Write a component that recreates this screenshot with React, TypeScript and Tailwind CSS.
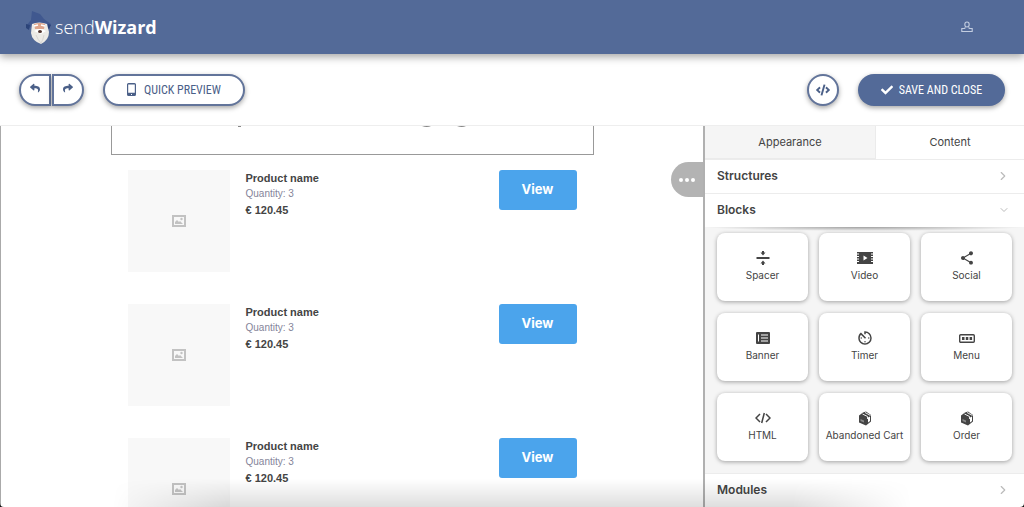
import { type ReactNode, useState } from 'react'
import { FaCheck, FaCode, FaReply, FaShare } from 'react-icons/fa'
import { MdAvTimer, MdShare } from 'react-icons/md'
import { ChevronDown, ChevronRight } from 'lucide-react'

type Product = {
  id: number
  name: string
  quantity: number
  price: string
}

type Block = {
  label: string
  icon: ReactNode
}

const products: Product[] = [
  { id: 1, name: 'Product name', quantity: 3, price: '€ 120.45' },
  { id: 2, name: 'Product name', quantity: 3, price: '€ 120.45' },
  { id: 3, name: 'Product name', quantity: 3, price: '€ 120.45' },
]

const blocks: Block[] = [
  { label: 'Spacer', icon: <SpacerIcon /> },
  { label: 'Video', icon: <VideoIcon /> },
  { label: 'Social', icon: <MdShare size={16} /> },
  { label: 'Banner', icon: <BannerIcon /> },
  { label: 'Timer', icon: <MdAvTimer size={18} /> },
  { label: 'Menu', icon: <MenuIcon /> },
  { label: 'HTML', icon: <CodeIcon /> },
  { label: 'Abandoned Cart', icon: <BoxIcon /> },
  { label: 'Order', icon: <BoxIcon /> },
]

export default function App() {
  return (
    <div className="relative flex h-screen flex-col overflow-hidden bg-white font-['Inter',sans-serif] text-[#444]">
      <Header />
      <Toolbar />
      <main className="flex min-h-0 flex-1 border-t border-[#eee]">
        <Canvas />
        <Sidebar />
      </main>
      <div
        aria-hidden
        className="pointer-events-none absolute inset-x-28 bottom-0 h-7 bg-linear-to-t from-black/13 to-transparent mask-x-from-85%"
      />
      <svg aria-hidden className="pointer-events-none absolute bottom-0 left-0 h-1 w-1" viewBox="0 0 4 4">
        <path d="M0 0Q0 4 4 4H0Z" fill="#111" />
      </svg>
      <svg aria-hidden className="pointer-events-none absolute bottom-0 right-0 h-1 w-1" viewBox="0 0 4 4">
        <path d="M4 0Q4 4 0 4H4Z" fill="#111" />
      </svg>
    </div>
  )
}

function Header() {
  return (
    <header className="z-10 flex h-[54px] shrink-0 items-center justify-between bg-[#536a98] pl-6 pr-[51px] shadow-[0_3px_8px_rgba(0,0,0,0.35)]">
      <a href="#" className="flex items-center gap-[3px] font-['Open_Sans',sans-serif] text-[18px] leading-6 text-white">
        <WizardLogo />
        <span>
          <span className="font-light">send</span>
          <span className="font-bold">Wizard</span>
        </span>
      </a>
      <button type="button" aria-label="Account" className="text-[#c3cde0]">
        <UserIcon />
      </button>
    </header>
  )
}

const outlined = 'flex h-8 items-center justify-center border-2 border-[#62749a] bg-white text-[#4b6088]'
const raised = 'shadow-[0_2px_5px_rgba(0,0,0,0.35)]'

function Toolbar() {
  return (
    <div className="flex h-[71px] shrink-0 items-center justify-between px-[19px] font-['Roboto_Condensed','Roboto',sans-serif] text-[12px]">
      <div className="flex items-center gap-[19px]">
        <div className="flex gap-px">
          <button type="button" aria-label="Undo" className={`${outlined} ${raised} w-8 rounded-l-full pb-1`}>
            <FaReply size={10} />
          </button>
          <button type="button" aria-label="Redo" className={`${outlined} ${raised} w-8 rounded-r-full pb-1`}>
            <FaShare size={10} />
          </button>
        </div>
        <button type="button" className={`${outlined} ${raised} w-[142px] gap-2 rounded-full`}>
          <PhoneIcon />
          QUICK PREVIEW
        </button>
      </div>
      <div className="flex items-center gap-[19px]">
        <button type="button" aria-label="Edit code" className={`${outlined} ${raised} w-8 rounded-full`}>
          <FaCode size={14} />
        </button>
        <button
          type="button"
          className={`${raised} flex h-8 w-[147px] items-center justify-center gap-[6px] rounded-full bg-[#536a98] text-white`}
        >
          <FaCheck size={12} />
          SAVE AND CLOSE
        </button>
      </div>
    </div>
  )
}

function Canvas() {
  return (
    <section className="relative min-w-0 flex-1 overflow-hidden border-l border-[#aaa]">
      <div className="mx-auto w-[483px]">
        <div className="h-[29px] border border-t-0 border-[#999]">
          {/* descenders of the heading that is scrolled out of view */}
          <svg aria-hidden width="481" height="2" viewBox="0 0 481 2" fill="#888">
            <path d="M126 0h3v1h-3zM310 0h9q-4 2-9 0zM345 0h9q-4 2-9 0z" />
          </svg>
        </div>
        <ul className="flex flex-col gap-8 px-[17px] pt-[15px]">
          {products.map((product) => (
            <ProductRow key={product.id} product={product} />
          ))}
        </ul>
      </div>
      <button
        type="button"
        aria-label="More options"
        className="absolute right-0 top-9 flex h-[35px] w-8 items-center justify-center gap-[2px] rounded-l-full bg-[#b3b3b3]"
      >
        <span className="size-1 rounded-full bg-white" />
        <span className="size-1 rounded-full bg-white" />
        <span className="size-1 rounded-full bg-white" />
      </button>
    </section>
  )
}

function ProductRow({ product }: { product: Product }) {
  return (
    <li className="flex h-[102px] items-start gap-4 font-['Liberation_Sans',sans-serif]">
      <div className="flex h-full w-[102px] items-center justify-center bg-[#f8f8f8]">
        <PictureIcon />
      </div>
      <div className="flex-1 leading-4">
        <h3 className="text-[11px] font-bold">{product.name}</h3>
        <p className="text-[10px] text-[#85859a]">Quantity: {product.quantity}</p>
        <p className="text-[11px] font-bold">{product.price}</p>
      </div>
      <button
        type="button"
        className="h-10 w-[78px] rounded-[3px] bg-[#4ba4ec] font-['Inter',sans-serif] text-[13px] font-bold text-white"
      >
        View
      </button>
    </li>
  )
}

function Sidebar() {
  const [tab, setTab] = useState('Content')
  return (
    <aside className="flex w-[321px] shrink-0 flex-col border-l-2 border-[#b0b0b0] bg-[#f5f5f5]">
      <div role="tablist" className="flex shrink-0 text-[11px]">
        {['Appearance', 'Content'].map((name) => (
          <button
            key={name}
            type="button"
            role="tab"
            aria-selected={tab === name}
            onClick={() => setTab(name)}
            className={
              tab === name
                ? 'h-[33px] w-[148px] bg-white'
                : 'h-[33px] flex-1 border-b border-r border-[#ebebeb] bg-[#f5f5f5]'
            }
          >
            {name}
          </button>
        ))}
      </div>
      <SectionHeader title="Structures" />
      <SectionHeader title="Blocks" open />
      <div className="relative grid shrink-0 grid-cols-3 gap-x-[11px] gap-y-3 px-3 pb-3 pt-[6px]">
        <div
          aria-hidden
          className="absolute inset-x-0 top-0 h-1 bg-[radial-gradient(50%_100%_at_50%_0%,rgba(0,0,0,0.35),transparent)]"
        />
        {blocks.map((block) => (
          <BlockCard key={block.label} block={block} />
        ))}
      </div>
      <SectionHeader title="Modules" />
    </aside>
  )
}

function SectionHeader({ title, open = false }: { title: string; open?: boolean }) {
  return (
    <button
      type="button"
      aria-expanded={open}
      className="flex h-[34px] shrink-0 items-center justify-between border-y border-t-[#ececec] border-b-transparent bg-white pl-3 pr-[14px] text-[12px] font-semibold"
    >
      {title}
      {open ? (
        <ChevronDown size={12} strokeWidth={2} className="text-[#bbb]" />
      ) : (
        <ChevronRight size={14} strokeWidth={2} className="text-[#bbb]" />
      )}
    </button>
  )
}

function BlockCard({ block }: { block: Block }) {
  return (
    <button
      type="button"
      className="relative flex h-[68px] flex-col items-center justify-center whitespace-nowrap rounded-lg bg-white pb-[2px] text-[10px] leading-4 shadow-[0_1px_4px_rgba(0,0,0,0.35)]"
    >
      <span className="flex h-[18px] items-center text-[#444]">{block.icon}</span>
      {block.label}
    </button>
  )
}

function WizardLogo() {
  return (
    <svg aria-hidden width="28" height="36" viewBox="0 0 28 36">
      <path d="M2 17L7 11L8 2L16 5L20 10L27 15L25 20L19 17H8L4 20Z" fill="#40588f" />
      <path d="M2 15l4 1-1 5-3-2zM24 15l3 1-2 4-2-1z" fill="#2c4479" />
      <path d="M8 15Q15 12 23 15L25 23Q25 31 17 35Q8 32 7 24Z" fill="#eceae6" />
      <path d="M10 15Q16 13 21 15L20 20H11Z" fill="#dda48c" />
      <path d="M10 17l4-1M17 16l4 1" stroke="#fff" strokeWidth="1.5" />
      <path d="M10 22Q16 18 22 22L17 25Z" fill="#fff" />
      <ellipse cx="16" cy="22.500" rx="2" ry="1.500" fill="#51352f" />
      <path d="M12 26Q14 31 17 34M20 26Q19 31 17 34" fill="none" stroke="#cecdcc" strokeWidth=".7" />
    </svg>
  )
}

function UserIcon() {
  return (
    <svg aria-hidden width="12" height="12" viewBox="0 0 12 12" fill="none" stroke="currentColor" strokeWidth="1.100">
      <ellipse cx="6" cy="3.500" rx="2.200" ry="2.500" />
      <path d="M4.500 6.500L3.500 7.500H.8V10.500H11.200V7.500H8.500L7.500 6.500" />
    </svg>
  )
}

function PhoneIcon() {
  return (
    <svg aria-hidden width="9" height="13" viewBox="0 0 9 13">
      <path
        d="M1.500 0h6A1.500 1.500 0 0 1 9 1.500v10A1.500 1.500 0 0 1 7.500 13h-6A1.500 1.500 0 0 1 0 11.500v-10A1.500 1.500 0 0 1 1.500 0ZM1.200 1.500v8.300h6.600V1.500ZM4 11h1v1H4Z"
        fill="currentColor"
        fillRule="evenodd"
      />
    </svg>
  )
}

function PictureIcon() {
  return (
    <svg aria-hidden width="14" height="12" viewBox="0 0 14 12" fill="none" stroke="#c2c2c2">
      <rect x="1" y="1" width="12" height="10" strokeWidth="2" />
      <path d="M3 9V7l2-2 2 2 1-1 3 3Z" fill="#c2c2c2" stroke="none" />
      <circle cx="9.500" cy="4" r="1.200" fill="#c2c2c2" stroke="none" />
    </svg>
  )
}

function SpacerIcon() {
  return (
    <svg aria-hidden width="14" height="14" viewBox="0 0 14 14" fill="currentColor">
      <path d="M.5 6h13v2H.5zM6 0h2v1.500h1.500L7 4.500 4.500 1.500H6zM6 14h2v-1.500h1.500L7 9.500l-2.500 3H6z" />
    </svg>
  )
}

function VideoIcon() {
  return (
    <svg aria-hidden width="16" height="12" viewBox="0 0 16 12">
      <path d="M0 0h16v12H0Z" fill="currentColor" />
      <path d="M0 1.500h2v1H0zM0 4h2v1H0zM0 6.500h2v1H0zM0 9h2v1H0zM14 1.500h2v1h-2zM14 4h2v1h-2zM14 6.500h2v1h-2zM14 9h2v1h-2zM6.500 3.500v5l4-2.500z" fill="#fff" />
    </svg>
  )
}

function BannerIcon() {
  return (
    <svg aria-hidden width="14" height="12" viewBox="0 0 14 12">
      <rect width="14" height="12" rx="1" fill="currentColor" />
      <path d="M2 2.500h1v7H2zM5 2.500h7v1H5zM5 5.500h7v1H5zM5 8.500h7v1H5z" fill="#fff" />
    </svg>
  )
}

function MenuIcon() {
  return (
    <svg aria-hidden width="16" height="9" viewBox="0 0 16 9">
      <rect x=".7" y=".7" width="14.600" height="7.600" rx="1" fill="none" stroke="currentColor" strokeWidth="1.400" />
      <path d="M3 3h2.500v3H3zM6.800 3h2.500v3H6.800zM10.600 3h2.500v3h-2.500z" fill="currentColor" />
    </svg>
  )
}

function CodeIcon() {
  return (
    <svg aria-hidden width="16" height="12" viewBox="0 0 16 12" fill="none" stroke="currentColor" strokeWidth="1.500">
      <path d="M5 2L1 6l4 4M11 2l4 4-4 4M9.300 1L6.700 11" />
    </svg>
  )
}

function BoxIcon() {
  return (
    <svg aria-hidden width="14" height="15" viewBox="0 0 14 15">
      <path d="M1 4.500L5 1.500L8 .5L13 4V10.500L8 14.500L1 11.500Z" fill="currentColor" />
      <path d="M4.500 3L9.500 5.500V8M7 1.500l5.500 3" fill="none" stroke="#fff" strokeWidth=".9" />
      <path d="M10 6.500l2-1v4.500l-2 1.500z" fill="#fff" />
      <path d="M2.500 8l3.500 1.500v2L2.500 10z" fill="#888" />
    </svg>
  )
}
